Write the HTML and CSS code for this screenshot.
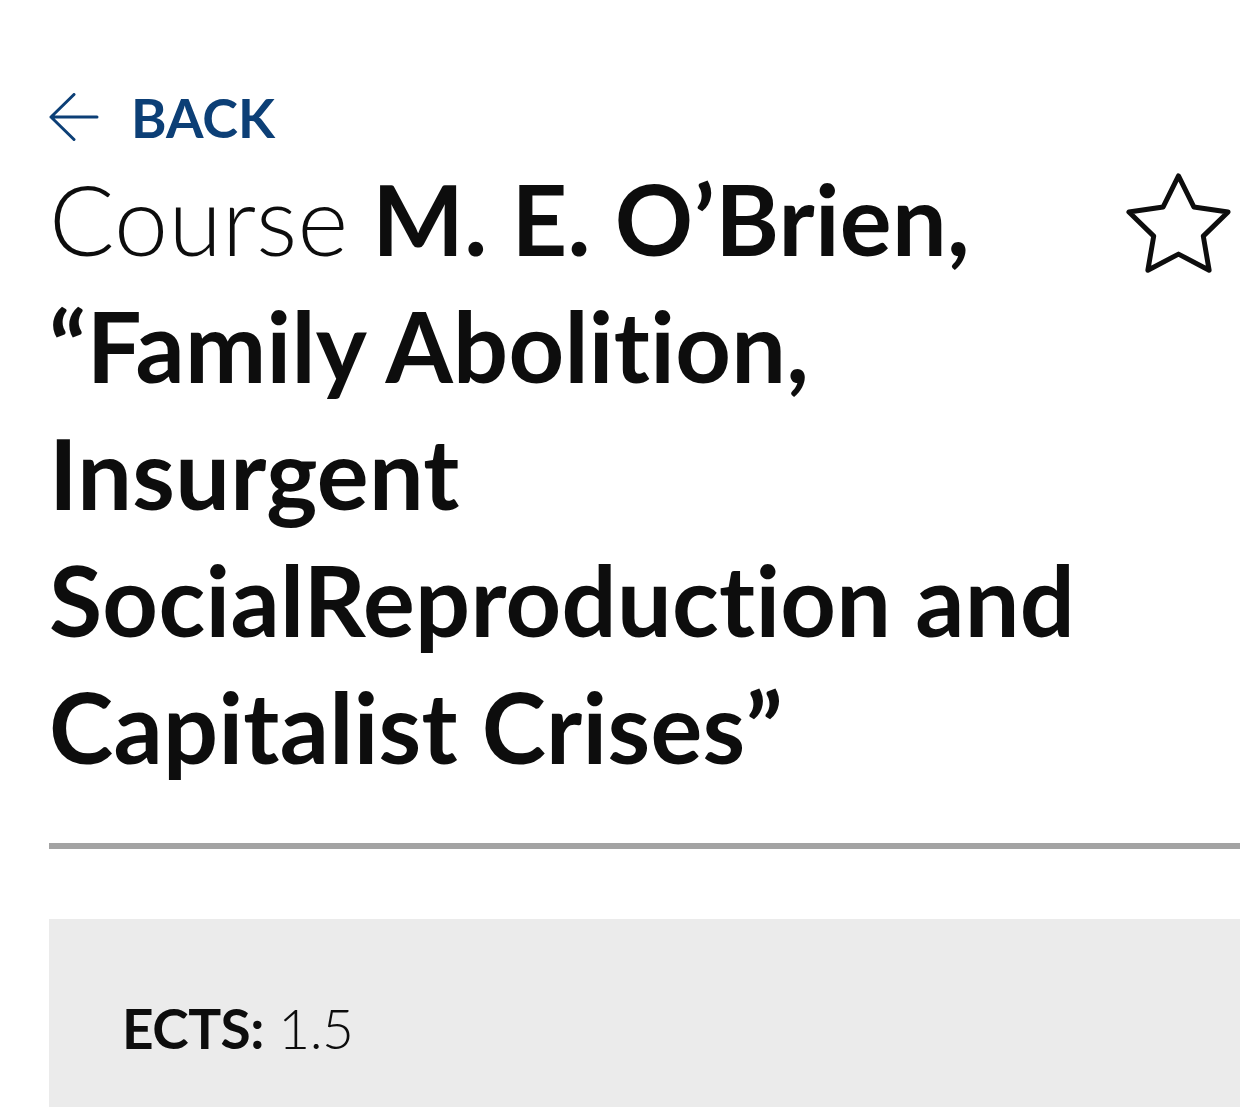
FILE: index.html
```html
<!DOCTYPE html>
<html lang="en">
<head>
    <meta charset="UTF-8">
    <meta name="viewport" content="width=device-width, initial-scale=1.0">
    <title>Course – Family Abolition</title>
    <link rel="stylesheet" href="styles.css">
</head>
<body>

<div class="page">
    <a class="back-link" href="#">
        <svg class="back-icon" viewBox="0 0 50 50" width="50" height="50" aria-hidden="true">
            <path d="M2 24 H48 M25 1.5 L2 24 L25 46.5" fill="none" stroke="currentColor" stroke-width="3" stroke-linecap="round" stroke-linejoin="round"/>
        </svg>
        <span>BACK</span>
    </a>

    <div class="title-row">
        <h1 class="course-title"><span class="course-label">Course</span> <span class="course-name">M. E. O’Brien, “Family Abolition, Insurgent SocialReproduction and Capitalist Crises”</span></h1>
        <!-- Aggiungi ai preferiti -->
        <button class="fav-button" aria-label="Add to favourites">
            <svg viewBox="0 0 24 24" width="119" height="119" aria-hidden="true">
                <path d="M12 2l3.09 6.26L22 9.27l-5 4.87 1.18 6.88L12 17.77l-6.18 3.25L7 14.14 2 9.27l6.91-1.01L12 2z" fill="none" stroke="currentColor" stroke-width="1" stroke-linejoin="round"/>
            </svg>
        </button>
    </div>

    <hr class="divider">

    <section class="info-box">
        <p class="info-line"><strong>ECTS:</strong> 1.5</p>
    </section>
</div>

</body>
</html>
```

FILE: styles.css
```css
body {
    margin: 0;
    padding: 0;
    background-color: #ffffff;
    color: #0d0d0d;
    font-family: Lato, "Liberation Sans", sans-serif;
    overflow: hidden;
}
.page {
    padding: 93px 0 0 49px;
}
.back-link {
    display: flex;
    align-items: center;
    gap: 32px;
    color: #0c3f76;
    text-decoration: none;
    font-weight: 700;
    font-size: 54px;
    line-height: 50px;
}
.back-icon {
    display: block;
    flex-shrink: 0;
}
.title-row {
    display: flex;
    align-items: flex-start;
    margin-top: 12px;
}
.course-title {
    flex: 1;
    margin: 0;
    font-size: 97px;
    font-weight: 700;
    line-height: 127px;
    letter-spacing: 0.3px;
}
.course-label {
    font-weight: 300;
}
.fav-button {
    flex-shrink: 0;
    margin: 11px 2px 0 0;
    padding: 0;
    border: none;
    background: none;
    color: #0d0d0d;
    cursor: pointer;
}
.fav-button svg {
    display: block;
}
.divider {
    margin: 53px 0 0;
    height: 6px;
    border: none;
    background-color: #a3a3a3;
}
.info-box {
    margin-top: 70px;
    padding: 76px 73px 60px;
    background-color: #ebebeb;
}
.info-line {
    margin: 0;
    font-size: 55px;
    font-weight: 300;
    letter-spacing: -0.5px;
}
.info-line strong {
    font-weight: 700;
}
```
